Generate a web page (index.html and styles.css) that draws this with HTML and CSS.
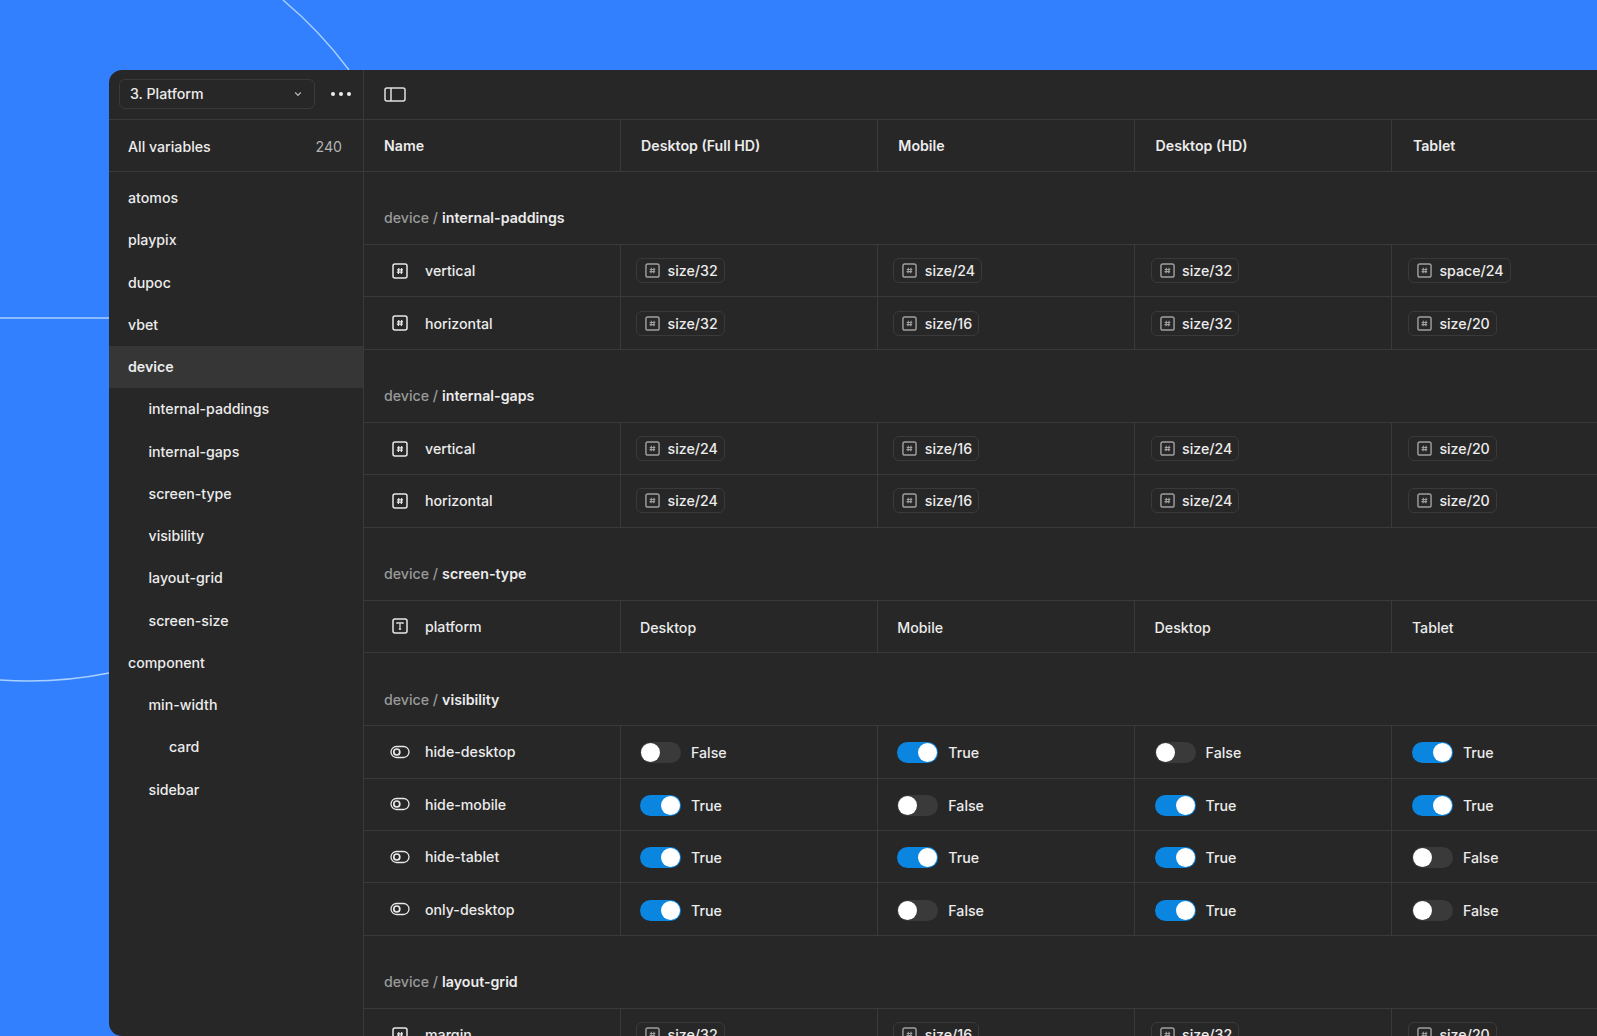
FILE: index.html
```html
<!DOCTYPE html>
<html lang="en">
<head>
    <meta charset="UTF-8">
    <title>Variables</title>
    <link rel="stylesheet" href="styles.css">
</head>
<body>
    <svg class="backdrop" width="1597" height="1036" viewBox="0 0 1597 1036" fill="none" stroke="#a9d0ff" stroke-width="1.4">
        <path d="M283 0A410 410 0 0 1 349 70"/>
        <path d="M0 318H109"/>
        <path d="M0 680A405 405 0 0 0 109 673"/>
    </svg>

    <svg class="icon-defs" width="0" height="0">
        <symbol id="icon-num" viewBox="0 0 16 16" fill="none" stroke="currentColor">
            <rect x="1" y="1" width="14" height="14" rx="2" stroke-width="1.5"/>
            <path d="M6.8 5 6.4 11M9.7 5 9.3 11M5 6.9h6M4.8 9.2h6" stroke-width="1.2"/>
        </symbol>
        <symbol id="icon-text" viewBox="0 0 16 16" fill="none" stroke="currentColor">
            <rect x="1" y="1" width="14" height="14" rx="2" stroke-width="1.5"/>
            <path d="M5 6V4.8h6V6M8 4.8v6.4M6.8 11.2h2.4" stroke-width="1.2"/>
        </symbol>
        <symbol id="icon-bool" viewBox="0 0 20 14" fill="none" stroke="currentColor">
            <rect x="1" y="1.5" width="18" height="11" rx="5.5" stroke-width="1.3"/>
            <circle cx="6.8" cy="7" r="3" stroke-width="1.7"/>
        </symbol>
    </svg>

    <div class="window">
        <aside class="sidebar">
            <div class="toolbar sidebar-top">
                <div class="collection-select">
                    <span>3. Platform</span>
                    <svg width="8" height="6" viewBox="0 0 8 6" fill="none" stroke="#bbb" stroke-width="1.2"><path d="M1.2 1.5 4 4.3l2.8-2.8"/></svg>
                </div>
                <svg class="more" width="20" height="4" viewBox="0 0 20 4" fill="#eee"><circle cx="2" cy="2" r="2"/><circle cx="10" cy="2" r="2"/><circle cx="18" cy="2" r="2"/></svg>
            </div>
            <div class="all-vars"><span>All variables</span><span class="count">240</span></div>
            <nav class="nav">
                <a>atomos</a>
                <a>playpix</a>
                <a>dupoc</a>
                <a>vbet</a>
                <a class="active">device</a>
                <a class="sub">internal-paddings</a>
                <a class="sub">internal-gaps</a>
                <a class="sub">screen-type</a>
                <a class="sub">visibility</a>
                <a class="sub">layout-grid</a>
                <a class="sub">screen-size</a>
                <a>component</a>
                <a class="sub">min-width</a>
                <a class="sub2">card</a>
                <a class="sub">sidebar</a>
            </nav>
        </aside>

        <main class="content">
            <div class="toolbar">
                <svg class="panel-icon" width="22" height="15" viewBox="0 0 22 15" fill="none" stroke="#e0e0e0" stroke-width="1.5"><rect x="1" y="1" width="20" height="13" rx="2"/><path d="M7 1v13"/></svg>
            </div>

            <div class="row head">
                <div class="cell">Name</div>
                <div class="cell">Desktop (Full HD)</div>
                <div class="cell">Mobile</div>
                <div class="cell">Desktop (HD)</div>
                <div class="cell">Tablet</div>
            </div>

            <div class="group-title">device / <b>internal-paddings</b></div>
            <div class="row">
                <div class="cell name"><svg class="type-icon"><use href="#icon-num"/></svg>vertical</div>
                <div class="cell"><span class="pill"><svg><use href="#icon-num"/></svg>size/32</span></div>
                <div class="cell"><span class="pill"><svg><use href="#icon-num"/></svg>size/24</span></div>
                <div class="cell"><span class="pill"><svg><use href="#icon-num"/></svg>size/32</span></div>
                <div class="cell"><span class="pill"><svg><use href="#icon-num"/></svg>space/24</span></div>
            </div>
            <div class="row">
                <div class="cell name"><svg class="type-icon"><use href="#icon-num"/></svg>horizontal</div>
                <div class="cell"><span class="pill"><svg><use href="#icon-num"/></svg>size/32</span></div>
                <div class="cell"><span class="pill"><svg><use href="#icon-num"/></svg>size/16</span></div>
                <div class="cell"><span class="pill"><svg><use href="#icon-num"/></svg>size/32</span></div>
                <div class="cell"><span class="pill"><svg><use href="#icon-num"/></svg>size/20</span></div>
            </div>

            <div class="group-title">device / <b>internal-gaps</b></div>
            <div class="row">
                <div class="cell name"><svg class="type-icon"><use href="#icon-num"/></svg>vertical</div>
                <div class="cell"><span class="pill"><svg><use href="#icon-num"/></svg>size/24</span></div>
                <div class="cell"><span class="pill"><svg><use href="#icon-num"/></svg>size/16</span></div>
                <div class="cell"><span class="pill"><svg><use href="#icon-num"/></svg>size/24</span></div>
                <div class="cell"><span class="pill"><svg><use href="#icon-num"/></svg>size/20</span></div>
            </div>
            <div class="row">
                <div class="cell name"><svg class="type-icon"><use href="#icon-num"/></svg>horizontal</div>
                <div class="cell"><span class="pill"><svg><use href="#icon-num"/></svg>size/24</span></div>
                <div class="cell"><span class="pill"><svg><use href="#icon-num"/></svg>size/16</span></div>
                <div class="cell"><span class="pill"><svg><use href="#icon-num"/></svg>size/24</span></div>
                <div class="cell"><span class="pill"><svg><use href="#icon-num"/></svg>size/20</span></div>
            </div>

            <div class="group-title">device / <b>screen-type</b></div>
            <div class="row">
                <div class="cell name"><svg class="type-icon"><use href="#icon-text"/></svg>platform</div>
                <div class="cell value">Desktop</div>
                <div class="cell value">Mobile</div>
                <div class="cell value">Desktop</div>
                <div class="cell value">Tablet</div>
            </div>

            <div class="group-title">device / <b>visibility</b></div>
            <div class="row">
                <div class="cell name"><svg class="type-icon bool"><use href="#icon-bool"/></svg>hide-desktop</div>
                <div class="cell value"><span class="toggle"></span>False</div>
                <div class="cell value"><span class="toggle on"></span>True</div>
                <div class="cell value"><span class="toggle"></span>False</div>
                <div class="cell value"><span class="toggle on"></span>True</div>
            </div>
            <div class="row">
                <div class="cell name"><svg class="type-icon bool"><use href="#icon-bool"/></svg>hide-mobile</div>
                <div class="cell value"><span class="toggle on"></span>True</div>
                <div class="cell value"><span class="toggle"></span>False</div>
                <div class="cell value"><span class="toggle on"></span>True</div>
                <div class="cell value"><span class="toggle on"></span>True</div>
            </div>
            <div class="row">
                <div class="cell name"><svg class="type-icon bool"><use href="#icon-bool"/></svg>hide-tablet</div>
                <div class="cell value"><span class="toggle on"></span>True</div>
                <div class="cell value"><span class="toggle on"></span>True</div>
                <div class="cell value"><span class="toggle on"></span>True</div>
                <div class="cell value"><span class="toggle"></span>False</div>
            </div>
            <div class="row">
                <div class="cell name"><svg class="type-icon bool"><use href="#icon-bool"/></svg>only-desktop</div>
                <div class="cell value"><span class="toggle on"></span>True</div>
                <div class="cell value"><span class="toggle"></span>False</div>
                <div class="cell value"><span class="toggle on"></span>True</div>
                <div class="cell value"><span class="toggle"></span>False</div>
            </div>

            <div class="group-title">device / <b>layout-grid</b></div>
            <div class="row">
                <div class="cell name"><svg class="type-icon"><use href="#icon-num"/></svg>margin</div>
                <div class="cell"><span class="pill"><svg><use href="#icon-num"/></svg>size/32</span></div>
                <div class="cell"><span class="pill"><svg><use href="#icon-num"/></svg>size/16</span></div>
                <div class="cell"><span class="pill"><svg><use href="#icon-num"/></svg>size/32</span></div>
                <div class="cell"><span class="pill"><svg><use href="#icon-num"/></svg>size/20</span></div>
            </div>
        </main>
    </div>
</body>
</html>
```

FILE: styles.css
```css
* {
    margin: 0;
    padding: 0;
    box-sizing: border-box;
}

html, body {
    height: 100%;
    overflow: hidden;
}

body {
    background-color: #3380ff;
    padding: 70px 0 0 109px;
    font-family: Inter, "Noto Sans", sans-serif;
    font-size: 14.2px;
    font-weight: 500;
    color: #ececec;
}

.backdrop {
    position: absolute;
    left: 0;
    top: 0;
}

.icon-defs {
    position: absolute;
}

.window {
    display: flex;
    width: 1600px;
    height: 966px;
    background-color: #272727;
    border-radius: 13px 0 0 13px;
    overflow: hidden;
    position: relative;
}

.sidebar {
    flex: 0 0 255px;
    border-right: 1px solid #3a3a3a;
}

.toolbar {
    display: flex;
    align-items: center;
    height: 49.5px;
    border-bottom: 1px solid #3a3a3a;
}

.sidebar-top {
    padding: 0 12px 0 10px;
    justify-content: space-between;
}

.collection-select {
    display: flex;
    align-items: center;
    justify-content: space-between;
    width: 196px;
    height: 30px;
    padding: 0 12px 1px 10px;
    border: 1px solid #3a3a3a;
    border-radius: 6px;
}

.all-vars {
    display: flex;
    align-items: center;
    justify-content: space-between;
    height: 52px;
    padding: 2px 21px 0 19px;
    border-bottom: 1px solid #3a3a3a;
}

.count {
    color: #b3b3b3;
    font-weight: 400;
}

.nav {
    display: flex;
    flex-direction: column;
    padding-top: 5px;
}

.nav a {
    display: flex;
    align-items: center;
    height: 42.25px;
    padding-left: 19px;
}

.nav a.active {
    background-color: #363636;
    font-weight: 600;
}

.nav a.sub {
    padding-left: 39.5px;
}

.nav a.sub2 {
    padding-left: 60px;
}

.content {
    flex: 1;
}

.panel-icon {
    margin-left: 19.5px;
}

.row {
    display: grid;
    grid-template-columns: 256.5px repeat(4, 257.3px);
    height: 52.45px;
    border-bottom: 1px solid #3a3a3a;
}

.cell {
    display: flex;
    align-items: center;
    padding-left: 15.5px;
    border-right: 1px solid #3a3a3a;
}

.head .cell {
    padding-left: 20.5px;
    font-weight: 600;
}

.head .cell:first-child {
    padding-left: 20px;
}

.cell.name {
    padding-left: 28px;
    gap: 17px;
}

.type-icon {
    width: 16px;
    height: 16px;
    color: #e8e8e8;
}

.type-icon.bool {
    width: 20px;
    height: 14px;
    margin: 0 -2px;
}

.cell.value {
    padding: 2px 0 0 19.5px;
    gap: 10px;
}

.group-title {
    display: flex;
    align-items: center;
    gap: 0.28em;
    height: 73px;
    padding: 20px 0 0 20px;
    border-bottom: 1px solid #3a3a3a;
    color: #9a9a9a;
}

.group-title b {
    color: #ececec;
    font-weight: 600;
}

.pill {
    display: inline-flex;
    align-items: center;
    gap: 7.5px;
    height: 25px;
    padding: 0 6px 0 8px;
    border: 1px solid #3a3a3a;
    border-radius: 6px;
}

.pill svg {
    width: 15px;
    height: 15px;
    color: #a0a0a0;
}

.toggle {
    position: relative;
    width: 41px;
    height: 21px;
    border-radius: 11px;
    background-color: #3a3a3a;
}

.toggle::after {
    content: "";
    position: absolute;
    top: 1px;
    left: 1px;
    width: 19px;
    height: 19px;
    border-radius: 50%;
    background-color: #fff;
}

.toggle.on {
    background-color: #0a85e0;
}

.toggle.on::after {
    left: 21px;
}
```
